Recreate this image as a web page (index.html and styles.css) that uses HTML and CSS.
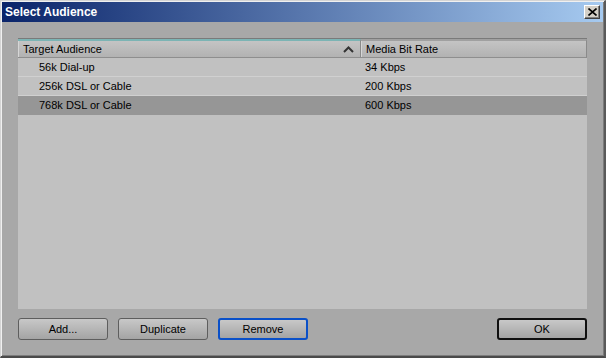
FILE: index.html
```html
<!DOCTYPE html>
<html>
<head>
    <title>Select Audience</title>
    <link rel="stylesheet" href="styles.css">
</head>
<body>
    <div class="dialog">
        <div class="titlebar">
            <span class="title">Select Audience</span>
            <button class="close-btn">
                <svg width="9" height="8" viewBox="0 0 9 8">
                    <path d="M0.5 0.5 L8.5 7.5 M8.5 0.5 L0.5 7.5" stroke="#000" stroke-width="1.6"/>
                </svg>
            </button>
        </div>

        <div class="content">
            <div class="list">
                <div class="list-header">
                    <div class="col col-audience sorted">
                        <span>Target Audience</span>
                        <svg class="sort-arrow" width="11" height="7" viewBox="0 0 11 7">
                            <path d="M1 6 L5.5 1.5 L10 6" fill="none" stroke="#333" stroke-width="2"/>
                        </svg>
                    </div>
                    <div class="col col-rate">Media Bit Rate</div>
                </div>
                <div class="row">
                    <div class="cell cell-audience">56k Dial-up</div>
                    <div class="cell cell-rate">34 Kbps</div>
                </div>
                <div class="row">
                    <div class="cell cell-audience">256k DSL or Cable</div>
                    <div class="cell cell-rate">200 Kbps</div>
                </div>
                <div class="row selected">
                    <div class="cell cell-audience">768k DSL or Cable</div>
                    <div class="cell cell-rate">600 Kbps</div>
                </div>
            </div>

            <div class="buttons">
                <button class="btn">Add...</button>
                <button class="btn">Duplicate</button>
                <button class="btn focused">Remove</button>
                <span class="spacer"></span>
                <button class="btn default">OK</button>
            </div>
        </div>
    </div>
</body>
</html>
```

FILE: styles.css
```css
body {
    margin: 0;
    font-family: "Liberation Sans", Arial, sans-serif;
    font-size: 11px;
    background: #a8a8a8;
}
.dialog {
    width: 606px;
    height: 358px;
    box-sizing: border-box;
    border-top: 1px solid #d4d4d4;
    border-left: 1px solid #d4d4d4;
    border-right: 2px solid #5a5a5a;
    border-bottom: 2px solid #4a4a4a;
    box-shadow: inset 1px 1px 0 #f0f0f0, inset -1px -1px 0 #7c7c7c;
    background: #a8a8a8;
    padding: 1px;
    display: flex;
    flex-direction: column;
}
.titlebar {
    height: 20px;
    display: flex;
    align-items: center;
    justify-content: space-between;
    padding: 0 3px 0 3px;
    background: linear-gradient(to right, #0a246a, #a6caf0);
}
.title {
    color: #fff;
    font-weight: bold;
    font-size: 12px;
}
.close-btn {
    width: 16px;
    height: 14px;
    padding: 0;
    margin: 0;
    display: flex;
    align-items: center;
    justify-content: center;
    background: #d4d0c8;
    border: 1px solid;
    border-color: #fff #404040 #404040 #fff;
    box-shadow: inset -1px -1px 0 #808080;
}
.content {
    flex: 1;
    display: flex;
    flex-direction: column;
    padding: 16px 16px 0 16px;
}
.list {
    height: 270px;
    background: #c1c1c1;
    border-top: 1px solid #7a7a7a;
}
.list-header {
    display: flex;
    height: 19px;
}
.col {
    display: flex;
    align-items: center;
    justify-content: space-between;
    box-sizing: border-box;
    padding: 0 4px 0 5px;
    background: linear-gradient(#c4c4c4, #b2b2b2);
    border-right: 1px solid #8a8a8a;
    border-bottom: 1px solid #8e8e8e;
    box-shadow: inset 1px 0 0 #d6d6d6;
}
.col-audience {
    width: 343px;
}
.col-audience.sorted {
    border-top: 2px solid #7cb4b4;
}
.col-rate {
    width: 226px;
    border-top: 2px solid #a0a0a0;
}
.sort-arrow {
    margin-right: 2px;
}
.row {
    display: flex;
    height: 18px;
    align-items: center;
    border-bottom: 1px solid #d0d0d0;
}
.row.selected {
    background: #969696;
    border-bottom-color: #969696;
}
.cell-audience {
    width: 344px;
    box-sizing: border-box;
    padding-left: 21px;
}
.cell-rate {
    padding-left: 3px;
}
.buttons {
    display: flex;
    align-items: center;
    gap: 10px;
    margin-top: 9px;
}
.spacer {
    flex: 1;
}
.btn {
    width: 90px;
    height: 22px;
    font-family: inherit;
    font-size: 11px;
    color: #000;
    background: linear-gradient(#c8c8c8, #a4a4a4);
    border: 1px solid #5e5e5e;
    border-radius: 3px;
    padding: 0;
}
.btn.focused {
    border: 2px solid #0a50c8;
}
.btn.default {
    border: 2px solid #101010;
}
```
